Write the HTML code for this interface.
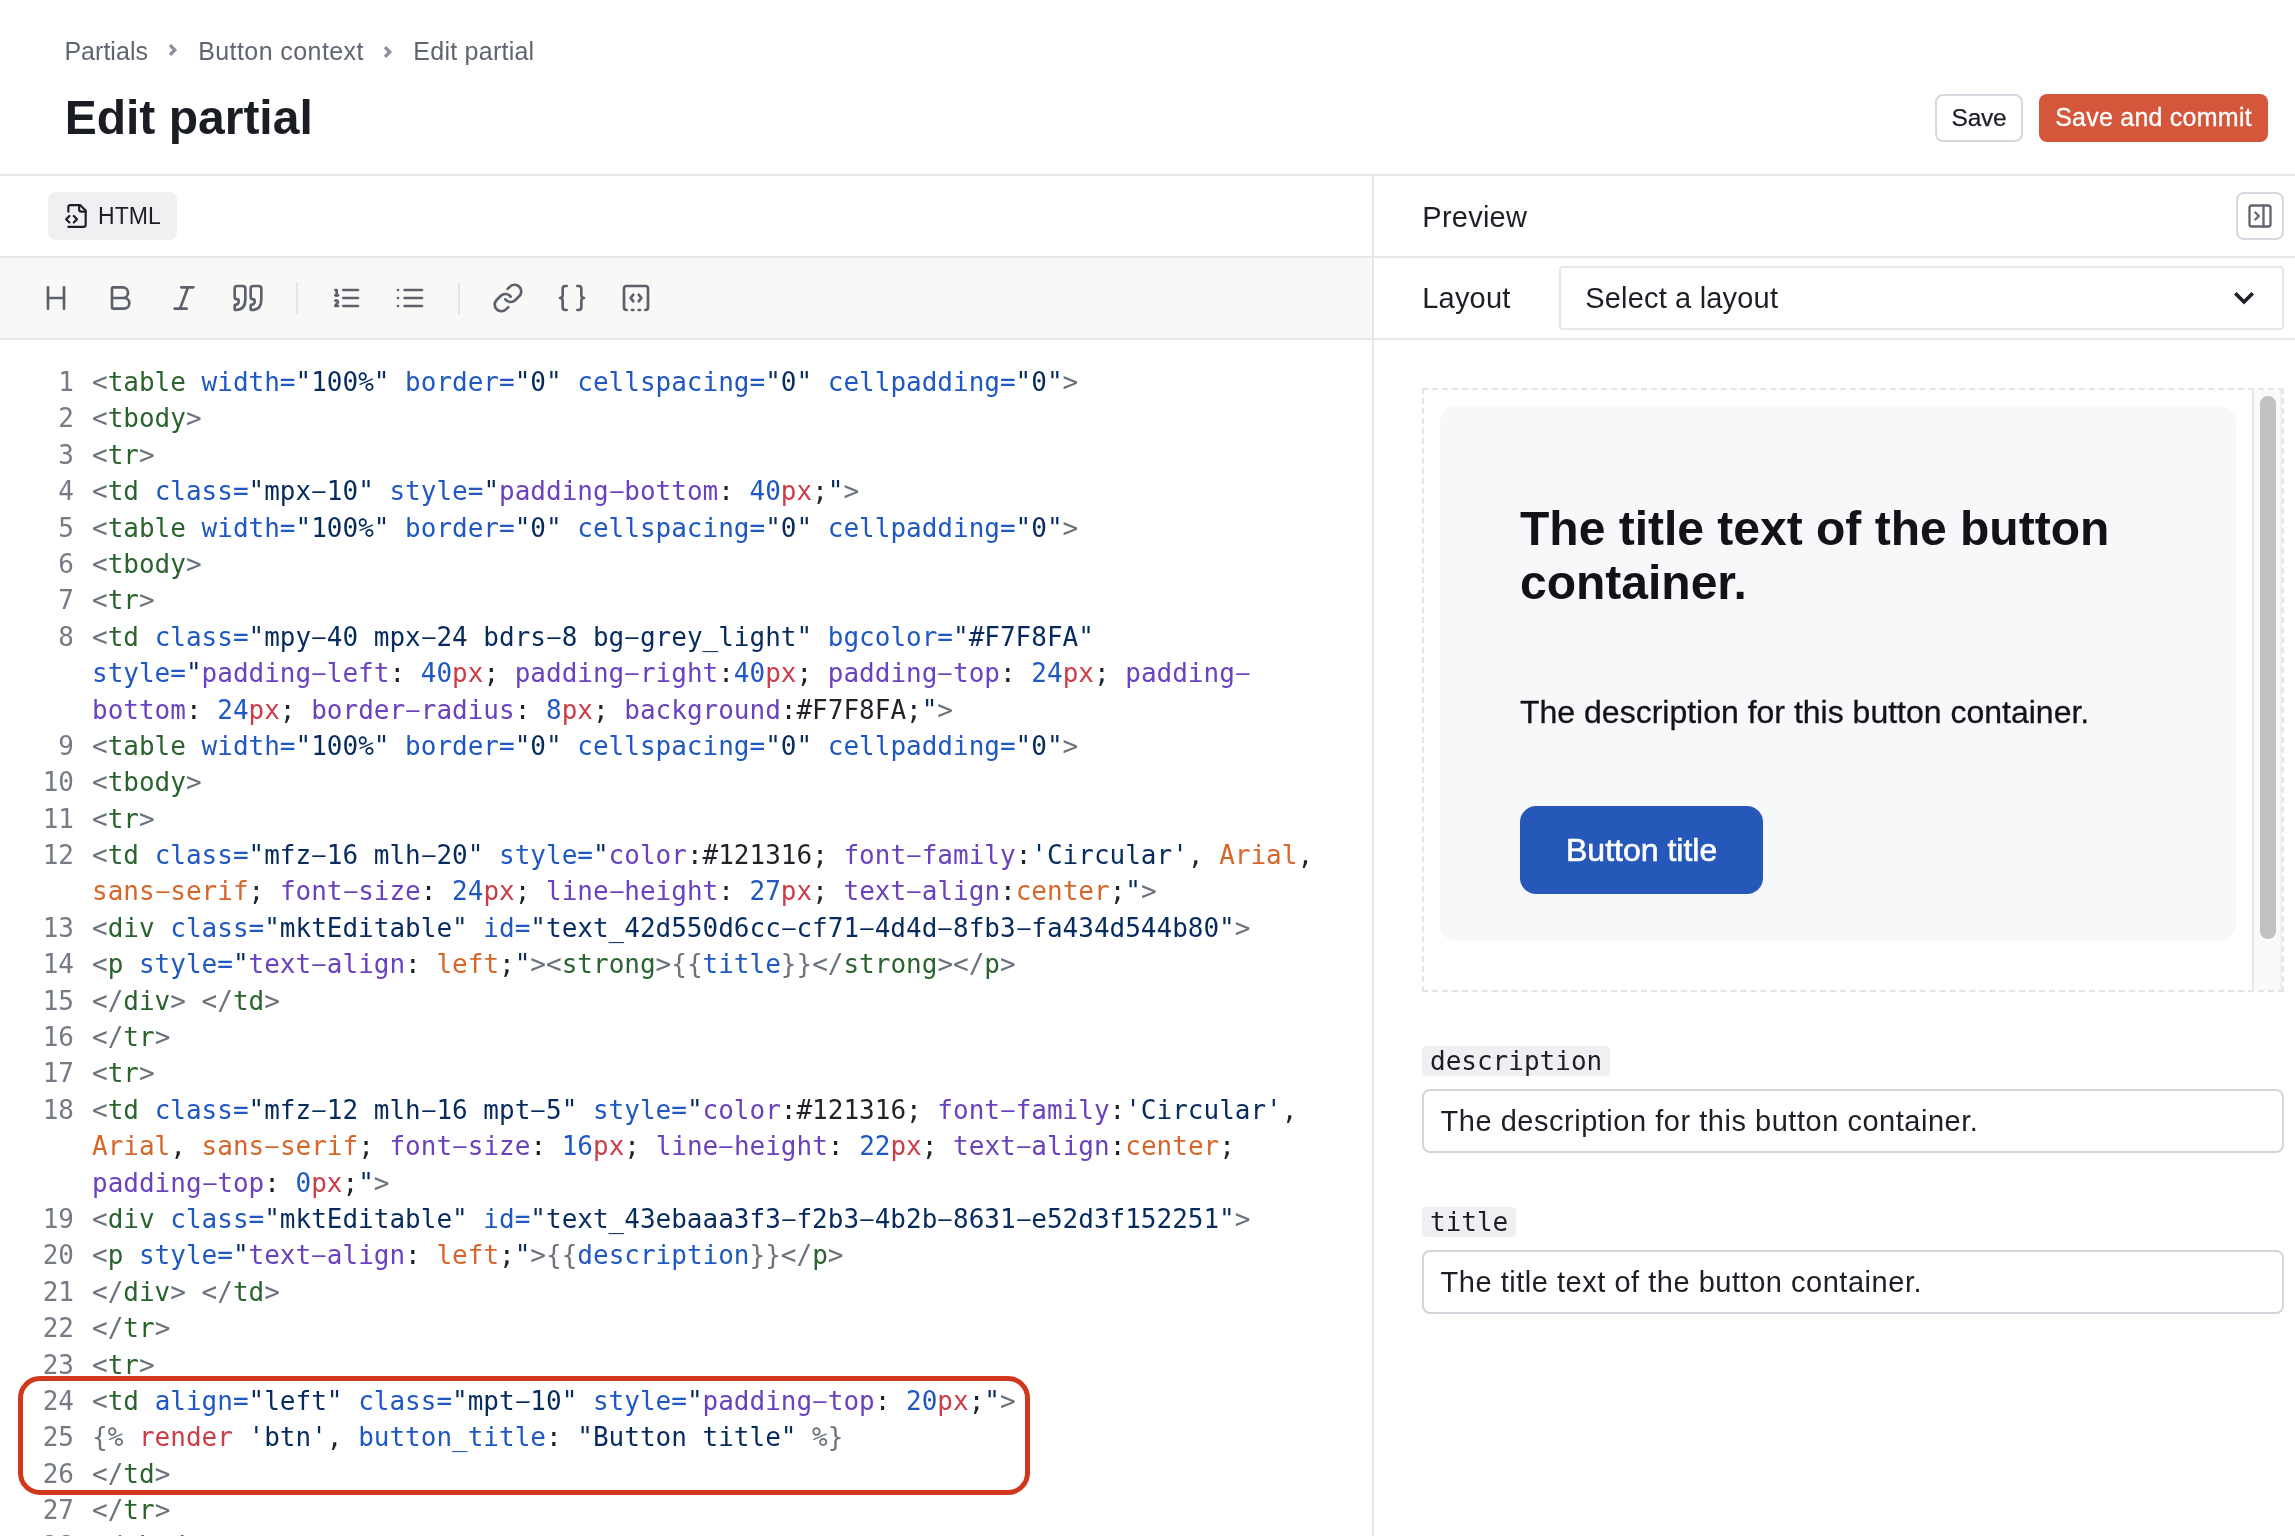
<!DOCTYPE html>
<html lang="en">
<head>
<meta charset="utf-8">
<title>Edit partial</title>
<style>
*{box-sizing:border-box;margin:0;padding:0}
html,body{width:2295px;height:1536px;overflow:hidden;background:#fff}
body{position:relative;font-family:"Liberation Sans",sans-serif;color:#1c1f26}
#app{position:absolute;left:0;top:0;width:2295px;height:1536px;overflow:hidden;background:#fff;will-change:transform}
.abs{position:absolute}
.t{position:absolute;white-space:nowrap;line-height:1}
/* header */
.crumb{font-size:25px;color:#5f6571;top:39.150px}
.chev{position:absolute}
h1{position:absolute;left:64.700px;top:92.300px;font-size:48px;line-height:52px;font-weight:bold;color:#1a1d23;letter-spacing:0;white-space:nowrap}
.hline{position:absolute;left:0;height:2px;background:#e6e6eb}
.vline{position:absolute;width:2px;background:#e6e6eb}
.btn{position:absolute;border-radius:8px;font-size:24px;padding-bottom:1px;display:flex;align-items:center;justify-content:center;white-space:nowrap}
/* code */
#code{position:absolute;left:0;top:364px;width:1372px;font-family:"DejaVu Sans Mono","Liberation Mono",monospace;font-size:26px;line-height:36.4px;color:#1f2328}
.ln{height:36.4px;white-space:pre;position:relative}
.no{position:absolute;left:0;width:74px;text-align:right;color:#757a85}
.cd{position:absolute;left:92px}
.cd i{display:inline-block;font-style:normal;transform:translateY(-.5px) scale(2,.8)}
.b{color:#6b727c}.t_{color:#2a632e}
.cd .t{position:static;color:#2a632e;line-height:inherit}
.a{color:#1f58c2}.s{color:#072b5e}.p{color:#6a41be}.n{color:#1f58c2}.u{color:#cc3d48}.k{color:#d8662a}.x{color:#1f2328}.r{color:#cc3d48}
.ic{fill:none;stroke:#5b606b;stroke-width:2;stroke-linecap:round;stroke-linejoin:round}
.mono{font-family:"DejaVu Sans Mono","Liberation Mono",monospace;font-size:26px;color:#1c1f26}
.inp{left:1422px;width:862px;height:64px;border:2px solid #d4d4dc;border-radius:8px;background:#fff}
.itx{left:1440.500px;font-size:29px;color:#1c1f26;letter-spacing:.525px}
</style>
</head>
<body>
<div id="app">
<!-- breadcrumbs -->
<div class="t crumb" id="c1" style="left:64.400px;letter-spacing:.03px">Partials</div>
<svg class="chev" style="left:160px;top:40px" width="24" height="22" viewBox="0 0 24 22"><path d="M10 5.100 14.850 10 10 14.900" fill="none" stroke="#8a8e9c" stroke-width="3.200" stroke-linecap="butt" stroke-linejoin="miter"/></svg>
<div class="t crumb" id="c2" style="left:198.200px;letter-spacing:.42px">Button context</div>
<svg class="chev" style="left:375.100px;top:42px" width="24" height="22" viewBox="0 0 24 22"><path d="M10 5.100 14.850 10 10 14.900" fill="none" stroke="#8a8e9c" stroke-width="3.200" stroke-linecap="butt" stroke-linejoin="miter"/></svg>
<div class="t crumb" id="c3" style="left:413.300px;letter-spacing:.25px">Edit partial</div>
<h1 id="h1">Edit partial</h1>

<div class="btn" style="left:1935px;top:94px;width:88px;height:48px;border:2px solid #d8d8e0;background:#fff;color:#1c1f26"><span id="bsave" style="font-size:24.500px;letter-spacing:-.23px;-webkit-text-stroke:.25px #1c1f26">Save</span></div>
<div class="btn" style="left:2039px;top:94px;width:229px;height:48px;background:#d4573b;color:#fff"><span id="bcommit" style="font-size:25px;letter-spacing:.24px;-webkit-text-stroke:.3px #fff">Save and commit</span></div>

<div class="hline" style="top:174px;width:2295px"></div>
<div class="hline" style="top:256px;width:2295px"></div>
<div class="hline" style="top:338px;width:2295px"></div>
<div class="abs" style="left:0;top:258px;width:1372px;height:80px;background:#f8f8f7"></div>
<div class="vline" style="left:1372px;top:176px;height:1360px"></div>

<!-- HTML tab -->
<div class="abs" style="left:48px;top:192px;width:129px;height:48px;border-radius:8px;background:#f0f0f3"></div>
<svg class="abs" style="left:64px;top:203px" width="26" height="26" viewBox="0 0 24 24" fill="none" stroke="#1c1f26" stroke-width="2" stroke-linecap="round" stroke-linejoin="round"><path d="M4 22h14a2 2 0 0 0 2-2V7l-5-5H6a2 2 0 0 0-2 2v4"/><path d="M14 2v4a2 2 0 0 0 2 2h4"/><path d="m5 12-3 3 3 3"/><path d="m9 18 3-3-3-3"/></svg>
<div class="t" id="thtml" style="left:98px;top:204.600px;font-size:23px;color:#1c1f26;letter-spacing:.1px">HTML</div>

<!-- toolbar icons -->
<svg class="abs ic" style="left:40px;top:282px" width="32" height="32" viewBox="0 0 24 24"><path d="M6 12h12"/><path d="M6 20V4"/><path d="M18 20V4"/></svg>
<svg class="abs ic" style="left:104px;top:282px" width="32" height="32" viewBox="0 0 24 24"><path d="M6 12h9a4 4 0 0 1 0 8H7a1 1 0 0 1-1-1V5a1 1 0 0 1 1-1h7a4 4 0 0 1 0 8"/></svg>
<svg class="abs ic" style="left:168px;top:282px" width="32" height="32" viewBox="0 0 24 24"><path d="M19 4h-9"/><path d="M14 20H5"/><path d="M15 4 9 20"/></svg>
<svg class="abs ic" style="left:232px;top:282px" width="32" height="32" viewBox="0 0 24 24"><path id="q" d="M3 21c3 0 7-1 7-8V5c0-1.250-.756-2.017-2-2H4c-1.250 0-2 .750-2 1.972V11c0 1.250.750 2 2 2 1 0 1 0 1 1v1c0 1-1 2-2 2s-1 .008-1 1.031V20c0 1 0 1 1 1z"/><path transform="translate(12 0)" d="M3 21c3 0 7-1 7-8V5c0-1.250-.756-2.017-2-2H4c-1.250 0-2 .750-2 1.972V11c0 1.250.750 2 2 2 1 0 1 0 1 1v1c0 1-1 2-2 2s-1 .008-1 1.031V20c0 1 0 1 1 1z"/></svg>
<div class="abs" style="left:296px;top:282px;width:2px;height:32px;background:#e4e4ea"></div>
<svg class="abs ic" style="left:330px;top:282px" width="32" height="32" viewBox="0 0 24 24"><path d="M10 6h11"/><path d="M10 12h11"/><path d="M10 18h11"/><path d="M4 6h1v4"/><path d="M4 10h2"/><path d="M6 18H4c0-1 2-2 2-3s-1-1.500-2-1"/></svg>
<svg class="abs ic" style="left:394px;top:282px" width="32" height="32" viewBox="0 0 24 24"><path d="M8 6h13"/><path d="M8 12h13"/><path d="M8 18h13"/><path d="M3 6h.01"/><path d="M3 12h.01"/><path d="M3 18h.01"/></svg>
<div class="abs" style="left:458px;top:282px;width:2px;height:32px;background:#e4e4ea"></div>
<svg class="abs ic" style="left:492px;top:282px" width="32" height="32" viewBox="0 0 24 24"><path d="M10 13a5 5 0 0 0 7.540.540l3-3a5 5 0 0 0-7.070-7.070l-1.720 1.710"/><path d="M14 11a5 5 0 0 0-7.540-.540l-3 3a5 5 0 0 0 7.070 7.070l1.710-1.710"/></svg>
<svg class="abs ic" style="left:556px;top:282px" width="32" height="32" viewBox="0 0 24 24"><path d="M8 3H7a2 2 0 0 0-2 2v5a2 2 0 0 1-2 2 2 2 0 0 1 2 2v5c0 1.100.900 2 2 2h1"/><path d="M16 21h1a2 2 0 0 0 2-2v-5c0-1.100.900-2 2-2a2 2 0 0 1-2-2V5a2 2 0 0 0-2-2h-1"/></svg>
<svg class="abs ic" style="left:620px;top:282px" width="32" height="32" viewBox="0 0 24 24"><path d="M10 9.500 8 12l2 2.500"/><path d="M14 21h1"/><path d="m14 9.500 2 2.500-2 2.500"/><path d="M5 21a2 2 0 0 1-2-2V5a2 2 0 0 1 2-2h14a2 2 0 0 1 2 2v14a2 2 0 0 1-2 2"/><path d="M9 21h1"/></svg>

<!-- code -->
<div id="code">
<div class="ln"><span class="no">1</span><span class="cd"><span class="b">&lt;</span><span class="t">table</span> <span class="a">width=</span><span class="s">"100%"</span> <span class="a">border=</span><span class="s">"0"</span> <span class="a">cellspacing=</span><span class="s">"0"</span> <span class="a">cellpadding=</span><span class="s">"0"</span><span class="b">&gt;</span></span></div>
<div class="ln"><span class="no">2</span><span class="cd"><span class="b">&lt;</span><span class="t">tbody</span><span class="b">&gt;</span></span></div>
<div class="ln"><span class="no">3</span><span class="cd"><span class="b">&lt;</span><span class="t">tr</span><span class="b">&gt;</span></span></div>
<div class="ln"><span class="no">4</span><span class="cd"><span class="b">&lt;</span><span class="t">td</span> <span class="a">class=</span><span class="s">"mpx<i>-</i>10"</span> <span class="a">style=</span><span class="s">"</span><span class="p">padding<i>-</i>bottom</span><span class="x">:</span> <span class="n">40</span><span class="u">px</span><span class="x">;</span><span class="s">"</span><span class="b">&gt;</span></span></div>
<div class="ln"><span class="no">5</span><span class="cd"><span class="b">&lt;</span><span class="t">table</span> <span class="a">width=</span><span class="s">"100%"</span> <span class="a">border=</span><span class="s">"0"</span> <span class="a">cellspacing=</span><span class="s">"0"</span> <span class="a">cellpadding=</span><span class="s">"0"</span><span class="b">&gt;</span></span></div>
<div class="ln"><span class="no">6</span><span class="cd"><span class="b">&lt;</span><span class="t">tbody</span><span class="b">&gt;</span></span></div>
<div class="ln"><span class="no">7</span><span class="cd"><span class="b">&lt;</span><span class="t">tr</span><span class="b">&gt;</span></span></div>
<div class="ln"><span class="no">8</span><span class="cd"><span class="b">&lt;</span><span class="t">td</span> <span class="a">class=</span><span class="s">"mpy<i>-</i>40 mpx<i>-</i>24 bdrs<i>-</i>8 bg<i>-</i>grey_light"</span> <span class="a">bgcolor=</span><span class="s">"#F7F8FA"</span></span></div>
<div class="ln"><span class="no"></span><span class="cd"><span class="a">style=</span><span class="s">"</span><span class="p">padding<i>-</i>left</span><span class="x">:</span> <span class="n">40</span><span class="u">px</span><span class="x">;</span> <span class="p">padding<i>-</i>right</span><span class="x">:</span><span class="n">40</span><span class="u">px</span><span class="x">;</span> <span class="p">padding<i>-</i>top</span><span class="x">:</span> <span class="n">24</span><span class="u">px</span><span class="x">;</span> <span class="p">padding<i>-</i></span></span></div>
<div class="ln"><span class="no"></span><span class="cd"><span class="p">bottom</span><span class="x">:</span> <span class="n">24</span><span class="u">px</span><span class="x">;</span> <span class="p">border<i>-</i>radius</span><span class="x">:</span> <span class="n">8</span><span class="u">px</span><span class="x">;</span> <span class="p">background</span><span class="x">:</span><span class="x">#F7F8FA</span><span class="x">;</span><span class="s">"</span><span class="b">&gt;</span></span></div>
<div class="ln"><span class="no">9</span><span class="cd"><span class="b">&lt;</span><span class="t">table</span> <span class="a">width=</span><span class="s">"100%"</span> <span class="a">border=</span><span class="s">"0"</span> <span class="a">cellspacing=</span><span class="s">"0"</span> <span class="a">cellpadding=</span><span class="s">"0"</span><span class="b">&gt;</span></span></div>
<div class="ln"><span class="no">10</span><span class="cd"><span class="b">&lt;</span><span class="t">tbody</span><span class="b">&gt;</span></span></div>
<div class="ln"><span class="no">11</span><span class="cd"><span class="b">&lt;</span><span class="t">tr</span><span class="b">&gt;</span></span></div>
<div class="ln"><span class="no">12</span><span class="cd"><span class="b">&lt;</span><span class="t">td</span> <span class="a">class=</span><span class="s">"mfz<i>-</i>16 mlh<i>-</i>20"</span> <span class="a">style=</span><span class="s">"</span><span class="p">color</span><span class="x">:</span><span class="x">#121316</span><span class="x">;</span> <span class="p">font<i>-</i>family</span><span class="x">:</span><span class="s">'Circular'</span><span class="x">,</span> <span class="k">Arial</span><span class="x">,</span></span></div>
<div class="ln"><span class="no"></span><span class="cd"><span class="k">sans<i>-</i>serif</span><span class="x">;</span> <span class="p">font<i>-</i>size</span><span class="x">:</span> <span class="n">24</span><span class="u">px</span><span class="x">;</span> <span class="p">line<i>-</i>height</span><span class="x">:</span> <span class="n">27</span><span class="u">px</span><span class="x">;</span> <span class="p">text<i>-</i>align</span><span class="x">:</span><span class="k">center</span><span class="x">;</span><span class="s">"</span><span class="b">&gt;</span></span></div>
<div class="ln"><span class="no">13</span><span class="cd"><span class="b">&lt;</span><span class="t">div</span> <span class="a">class=</span><span class="s">"mktEditable"</span> <span class="a">id=</span><span class="s">"text_42d550d6cc<i>-</i>cf71<i>-</i>4d4d<i>-</i>8fb3<i>-</i>fa434d544b80"</span><span class="b">&gt;</span></span></div>
<div class="ln"><span class="no">14</span><span class="cd"><span class="b">&lt;</span><span class="t">p</span> <span class="a">style=</span><span class="s">"</span><span class="p">text<i>-</i>align</span><span class="x">:</span> <span class="k">left</span><span class="x">;</span><span class="s">"</span><span class="b">&gt;</span><span class="b">&lt;</span><span class="t">strong</span><span class="b">&gt;</span><span class="b">{{</span><span class="a">title</span><span class="b">}}</span><span class="b">&lt;/</span><span class="t">strong</span><span class="b">&gt;</span><span class="b">&lt;/</span><span class="t">p</span><span class="b">&gt;</span></span></div>
<div class="ln"><span class="no">15</span><span class="cd"><span class="b">&lt;/</span><span class="t">div</span><span class="b">&gt;</span> <span class="b">&lt;/</span><span class="t">td</span><span class="b">&gt;</span></span></div>
<div class="ln"><span class="no">16</span><span class="cd"><span class="b">&lt;/</span><span class="t">tr</span><span class="b">&gt;</span></span></div>
<div class="ln"><span class="no">17</span><span class="cd"><span class="b">&lt;</span><span class="t">tr</span><span class="b">&gt;</span></span></div>
<div class="ln"><span class="no">18</span><span class="cd"><span class="b">&lt;</span><span class="t">td</span> <span class="a">class=</span><span class="s">"mfz<i>-</i>12 mlh<i>-</i>16 mpt<i>-</i>5"</span> <span class="a">style=</span><span class="s">"</span><span class="p">color</span><span class="x">:</span><span class="x">#121316</span><span class="x">;</span> <span class="p">font<i>-</i>family</span><span class="x">:</span><span class="s">'Circular'</span><span class="x">,</span></span></div>
<div class="ln"><span class="no"></span><span class="cd"><span class="k">Arial</span><span class="x">,</span> <span class="k">sans<i>-</i>serif</span><span class="x">;</span> <span class="p">font<i>-</i>size</span><span class="x">:</span> <span class="n">16</span><span class="u">px</span><span class="x">;</span> <span class="p">line<i>-</i>height</span><span class="x">:</span> <span class="n">22</span><span class="u">px</span><span class="x">;</span> <span class="p">text<i>-</i>align</span><span class="x">:</span><span class="k">center</span><span class="x">;</span></span></div>
<div class="ln"><span class="no"></span><span class="cd"><span class="p">padding<i>-</i>top</span><span class="x">:</span> <span class="n">0</span><span class="u">px</span><span class="x">;</span><span class="s">"</span><span class="b">&gt;</span></span></div>
<div class="ln"><span class="no">19</span><span class="cd"><span class="b">&lt;</span><span class="t">div</span> <span class="a">class=</span><span class="s">"mktEditable"</span> <span class="a">id=</span><span class="s">"text_43ebaaa3f3<i>-</i>f2b3<i>-</i>4b2b<i>-</i>8631<i>-</i>e52d3f152251"</span><span class="b">&gt;</span></span></div>
<div class="ln"><span class="no">20</span><span class="cd"><span class="b">&lt;</span><span class="t">p</span> <span class="a">style=</span><span class="s">"</span><span class="p">text<i>-</i>align</span><span class="x">:</span> <span class="k">left</span><span class="x">;</span><span class="s">"</span><span class="b">&gt;</span><span class="b">{{</span><span class="a">description</span><span class="b">}}</span><span class="b">&lt;/</span><span class="t">p</span><span class="b">&gt;</span></span></div>
<div class="ln"><span class="no">21</span><span class="cd"><span class="b">&lt;/</span><span class="t">div</span><span class="b">&gt;</span> <span class="b">&lt;/</span><span class="t">td</span><span class="b">&gt;</span></span></div>
<div class="ln"><span class="no">22</span><span class="cd"><span class="b">&lt;/</span><span class="t">tr</span><span class="b">&gt;</span></span></div>
<div class="ln"><span class="no">23</span><span class="cd"><span class="b">&lt;</span><span class="t">tr</span><span class="b">&gt;</span></span></div>
<div class="ln"><span class="no">24</span><span class="cd"><span class="b">&lt;</span><span class="t">td</span> <span class="a">align=</span><span class="s">"left"</span> <span class="a">class=</span><span class="s">"mpt<i>-</i>10"</span> <span class="a">style=</span><span class="s">"</span><span class="p">padding<i>-</i>top</span><span class="x">:</span> <span class="n">20</span><span class="u">px</span><span class="x">;</span><span class="s">"</span><span class="b">&gt;</span></span></div>
<div class="ln"><span class="no">25</span><span class="cd"><span class="b">{%</span> <span class="r">render</span> <span class="s">'btn'</span><span class="x">,</span> <span class="a">button_title</span><span class="x">:</span> <span class="s">"Button title"</span> <span class="b">%}</span></span></div>
<div class="ln"><span class="no">26</span><span class="cd"><span class="b">&lt;/</span><span class="t">td</span><span class="b">&gt;</span></span></div>
<div class="ln"><span class="no">27</span><span class="cd"><span class="b">&lt;/</span><span class="t">tr</span><span class="b">&gt;</span></span></div>
<div class="ln" style="top:-.600px"><span class="no">28</span><span class="cd"><span class="b">&lt;/</span><span class="t">tbody</span><span class="b">&gt;</span></span></div>
</div>

<!-- highlight -->
<div class="abs" style="left:18px;top:1376px;width:1012px;height:119px;border:5px solid #d0371c;border-radius:22px"></div>

<!-- right -->
<div class="t" id="tprev" style="left:1422.300px;top:202.600px;font-size:29px;color:#1c1f26;letter-spacing:.25px">Preview</div>
<div class="abs" style="left:2236px;top:192px;width:48px;height:48px;border:2px solid #d8d8e0;border-radius:8px;background:#fff"></div>
<svg class="abs" style="left:2246px;top:202px" width="28" height="28" viewBox="0 0 24 24" fill="none" stroke="#62676f" stroke-width="2" stroke-linecap="round" stroke-linejoin="round"><rect width="18" height="18" x="3" y="3" rx="2"/><path d="M15 3v18"/><path d="m8 9 3 3-3 3"/></svg>
<div class="t" id="tlay" style="left:1422.200px;top:284px;font-size:29px;color:#1c1f26;letter-spacing:.22px">Layout</div>
<div class="abs" style="left:1559px;top:266px;width:725px;height:64px;border:2px solid #e6e6ec;border-radius:4px;background:#fff"></div>
<div class="t" id="tsel" style="left:1585.200px;top:284px;font-size:29px;color:#1c1f26;letter-spacing:.18px">Select a layout</div>
<svg class="abs" style="left:2230px;top:286px" width="28" height="24" viewBox="0 0 28 24"><path d="M5.300 7.300 14 16 22.700 7.300" fill="none" stroke="#1c1f26" stroke-width="3.600"/></svg>

<!-- preview frame -->
<div class="abs" style="left:1422px;top:388px;width:862px;height:604px;border:2px dashed #e4e4ea;background:#fff"></div>
<div class="abs" style="left:2252px;top:390px;width:30px;height:600px;background:#fafafa;border-left:2px solid #e8e8e8;border-right:2px solid #f0f0f0"></div>
<div class="abs" style="left:2260px;top:396px;width:16px;height:543px;border-radius:8px;background:#c1c1c1"></div>
<div class="abs" style="left:1440px;top:406px;width:796px;height:535px;border-radius:16px;background:#f7f8fa"></div>
<div class="abs" id="ptitle" style="left:1520px;top:502px;width:660px;font-size:48px;line-height:54px;font-weight:bold;color:#121316">The title text of the button container.</div>
<div class="t" id="pdesc" style="left:1520px;top:696px;font-size:32px;color:#121316;-webkit-text-stroke:.3px #121316">The description for this button container.</div>
<div class="abs" style="left:1520px;top:806px;width:243px;height:88px;border-radius:16px;background:#2658ba"></div>
<div class="t" id="pbtn" style="left:1566px;top:834.200px;font-size:32px;color:#fff;-webkit-text-stroke:.6px #fff">Button title</div>

<!-- variables -->
<div class="abs" style="left:1422px;top:1046px;width:188px;height:30px;border-radius:4px;background:#f0f0f3"></div>
<div class="t mono" id="vdesc" style="left:1430px;top:1048px">description</div>
<div class="abs inp" style="top:1089px"></div>
<div class="t itx" id="idesc" style="top:1106.500px">The description for this button container.</div>
<div class="abs" style="left:1422px;top:1207px;width:94px;height:30px;border-radius:4px;background:#f0f0f3"></div>
<div class="t mono" id="vtitle" style="left:1430px;top:1209px">title</div>
<div class="abs inp" style="top:1250px"></div>
<div class="t itx" id="ititle" style="top:1267.600px">The title text of the button container.</div>

</div>
</body>
</html>
